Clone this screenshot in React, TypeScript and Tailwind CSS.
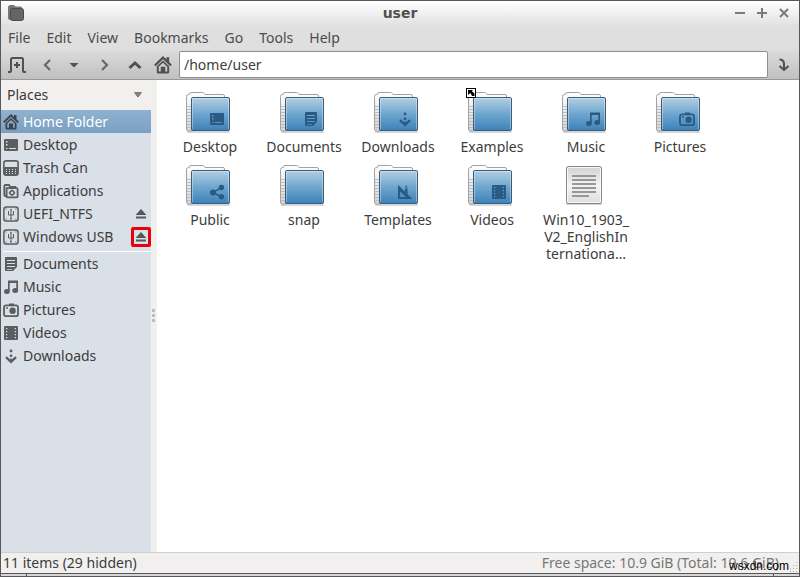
import { useState } from 'react';
import type { ReactNode } from 'react';

type IconName =
  | 'home'
  | 'desktop'
  | 'trash'
  | 'apps'
  | 'usb'
  | 'documents'
  | 'music'
  | 'pictures'
  | 'videos'
  | 'downloads'
  | 'public'
  | 'templates';

// every glyph is drawn on a 16x16 grid so the folders can reuse them as emblems
const glyphs: Record<IconName, ReactNode> = {
  home: (
    <>
      <path d="M0.8 8.4 8 1.4l7.2 7" fill="none" stroke="currentColor" strokeWidth="2" />
      <path d="M11 1h2.5v5L11 3.5z" />
      <path
        fillRule="evenodd"
        d="M2.5 9.2 8 4l5.5 5.2V14.5q0 1-1 1h-9q-1 0-1-1zM4.2 9.6v4.2H6V9.5h4v4.3h1.8V9.6L8 6z"
      />
      <path d="M7 10.5h2V15H7z" />
    </>
  ),
  desktop: (
    <path
      fillRule="evenodd"
      d="M2 2h12q1 0 1 1v10q0 1-1 1H2q-1 0-1-1V3q0-1 1-1zM3 4v1.5h1.5V4zM3 7v1.5h1.5V7zM3 11v1h1.5v-1zM6 11v1h7v-1z"
    />
  ),
  trash: (
    <>
      <rect x="0.9" y="0.9" width="14.2" height="14.2" rx="2.2" fill="none" stroke="currentColor" strokeWidth="1.6" />
      <path
        fillRule="evenodd"
        d="M1 7h14v7.5q0 .5-.5.5h-13q-.5 0-.5-.5zM3 9v1h1V9zM6 9v1h1V9zM9 9v1h1V9zM12 9v1h1V9zM3 11v1h1v-1zM6 11v1h1v-1zM9 11v1h1v-1zM12 11v1h1v-1zM3 13v1h1v-1zM6 13v1h1v-1zM9 13v1h1v-1zM12 13v1h1v-1z"
      />
    </>
  ),
  apps: (
    <>
      <path
        d="M3.8 13H2.2Q1.3 13 1.3 12V3.2Q1.3 2 2.5 2H6l1 1.8h6.200M3.6 5.2h10q1 0 1 1v7.2q0 1-1 1H4.6q-1 0-1-1z"
        fill="none"
        stroke="currentColor"
        strokeWidth="1.8"
      />
      <circle cx="9" cy="9.8" r="2" fill="none" stroke="currentColor" strokeWidth="1.5" />
      <path d="M8.4 6.6h1.2v1H8.4zM8.4 12h1.2v1H8.4zM5.800 9.2h1v1.2h-1zM11.2 9.2h1v1.2h-1z" />
    </>
  ),
  usb: (
    <>
      <rect x="0.9" y="0.9" width="14.2" height="14.2" rx="2.4" fill="none" stroke="currentColor" strokeWidth="1.5" />
      <path d="M8 3v10M5.500 5.500v3.500h5V5.500" fill="none" stroke="currentColor" />
      <path d="M7 4.2 8 2.4l1 1.8zM7.2 12h1.6v1.4H7.2zM5 5h1v1.400H5zM10 5h1v1.400h-1zM2.600 2.600h1v1h-1zM12.4 2.6h1v1h-1zM2.600 12.4h1v1h-1zM12.4 12.4h1v1h-1z" />
    </>
  ),
  documents: (
    <path
      fillRule="evenodd"
      d="M3 1h10q1 0 1 1v9l-4 4H3q-1 0-1-1V2q0-1 1-1zM4 4v1h8V4zM4 7v1h8V7zM4 10v1h8v-1zM4 13v.8h5V13z"
    />
  ),
  music: (
    <>
      <path d="M5 1.5h10v2.6H6.7V12H5zM13.3 3H15v8.5h-1.7z" />
      <ellipse cx="3.9" cy="12.4" rx="2.9" ry="2.5" />
      <ellipse cx="12.2" cy="11.6" rx="2.9" ry="2.5" />
    </>
  ),
  pictures: (
    <>
      <rect x="1" y="3.4" width="14" height="10.8" rx="2" fill="none" stroke="currentColor" strokeWidth="1.8" />
      <path d="M6 1.5h5v2H6zM3 5.2h2v1.5H3z" />
      <circle cx="9.6" cy="8.8" r="3.2" />
    </>
  ),
  videos: (
    <path
      fillRule="evenodd"
      d="M2 1h12q1 0 1 1v12q0 1-1 1H2q-1 0-1-1V2q0-1 1-1zM3 3v1.300h1.300V3zM3 6v1.300h1.300V6zM3 9v1.300h1.300V9zM3 12v1.300h1.300V12zM11.700 3v1.300H13V3zM11.700 6v1.300H13V6zM11.700 9v1.300H13V9zM11.700 12v1.300H13V12z"
    />
  ),
  downloads: (
    <>
      <path d="M3 9.200 8 13.800l5-4.600" fill="none" stroke="currentColor" strokeWidth="2.400" />
      <path d="M7.200 10.500h1.600V13H7.200z" />
      <circle cx="8" cy="3" r="1.400" />
      <circle cx="8" cy="7.800" r="1.400" />
    </>
  ),
  public: (
    <>
      <path d="M12.5 3.6 4 8.4l8.5 4.4" fill="none" stroke="currentColor" strokeWidth="1.6" />
      <circle cx="4" cy="8.4" r="3" />
      <circle cx="12.4" cy="3.5" r="2.7" />
      <circle cx="12.4" cy="12.8" r="2.7" />
    </>
  ),
  templates: (
    <>
      <path fillRule="evenodd" d="M1 1 15.500 15H1zM3.200 7.400V13h5.600z" />
      <path d="M8 4.500h2.500V11L8 8.500zM8 3.500l1.250-2.500 1.250 2.500z" />
    </>
  ),
};

const Icon = ({ name, className }: { name: IconName; className?: string }) => (
  <svg viewBox="0 0 16 16" className={className ?? 'size-4 shrink-0'} fill="currentColor" aria-hidden="true">
    {glyphs[name]}
  </svg>
);

const Eject = () => (
  <svg viewBox="0 0 12 12" className="size-3" fill="#555859" aria-hidden="true">
    <path d="M6 1 11.4 7H.6zM1 8.5h10v2H1z" />
  </svg>
);

const FolderIcon = ({ emblem, link }: { emblem?: IconName; link?: boolean }) => (
  <svg viewBox="0 0 48 48" className="size-12 overflow-visible" aria-hidden="true">
    <defs>
      <linearGradient id="front" x1="0" y1="0" x2="0" y2="1">
        <stop offset="0" stopColor="#b3cfe4" />
        <stop offset="0.5" stopColor="#6fa6cf" />
        <stop offset="1" stopColor="#3c82b9" />
      </linearGradient>
      <linearGradient id="paper" x1="0" y1="0" x2="0" y2="1">
        <stop offset="0" stopColor="#ffffff" />
        <stop offset="1" stopColor="#d4d4d4" />
      </linearGradient>
    </defs>
    <rect x="1" y="41" width="43" height="3" rx="1.5" fill="#000" opacity="0.16" />
    <path
      d="M.5 40V7.5q0-2 2-2h.8V5q0-1.500 1.700-1.500H16.500q1.500 0 2 1l.5 1h18q1.500 0 1.500 1.500v3H6v32H2.500q-2 0-2-2z"
      fill="url(#paper)"
      stroke="#a2a2a2"
    />
    <path d="M1 17.500h4M1 20.500h4M1 23.500h4M1 26.500h4M1 29.500h4M1 32.500h4M1 35.500h4M1 38.500h4" stroke="#bdbdbd" />
    <rect x="5.500" y="8.500" width="38" height="33" rx="1.500" fill="url(#front)" stroke="#3b5b78" />
    <path d="M6.500 40V9.500h36V40" fill="none" stroke="#fff" opacity="0.35" />
    {emblem && (
      <svg x="23" y="22" width="16" height="16" viewBox="0 0 16 16" fill="currentColor" color="#2b5a82">
        {glyphs[emblem]}
      </svg>
    )}
    {link && (
      <>
        <rect x="-1.500" y="-.5" width="9" height="9" fill="#fff" stroke="#000" />
        <path d="M0 1h5L3.800 2.300 6.500 4.500V7H4L2.500 4 0 6z" fill="#000" />
      </>
    )}
  </svg>
);

const TextFileIcon = () => (
  <svg viewBox="0 0 48 48" className="size-12" aria-hidden="true">
    <defs>
      <linearGradient id="sheet" x1="0" y1="0" x2="0" y2="1">
        <stop offset="0" stopColor="#d2d2d2" />
        <stop offset="0.5" stopColor="#f3f3f3" />
        <stop offset="1" stopColor="#dedede" />
      </linearGradient>
    </defs>
    <rect x="4" y="40" width="36" height="3" rx="1.500" fill="#000" opacity="0.18" />
    <rect x="4.500" y="4.500" width="35" height="37" rx="2" fill="url(#sheet)" stroke="#858585" />
    <rect x="5.500" y="5.500" width="33" height="35" rx="1" fill="none" stroke="#fff" opacity="0.8" />
    <path d="M10 14h24M10 18h24M10 22h24M10 26h24M10 30h24M10 34h17" stroke="#989898" strokeWidth="2" />
  </svg>
);

interface Place {
  name: string;
  icon: IconName;
  active?: boolean;
  eject?: boolean;
  marked?: boolean;
}

const places: Place[] = [
  { name: 'Home Folder', icon: 'home', active: true },
  { name: 'Desktop', icon: 'desktop' },
  { name: 'Trash Can', icon: 'trash' },
  { name: 'Applications', icon: 'apps' },
  { name: 'UEFI_NTFS', icon: 'usb', eject: true },
  { name: 'Windows USB', icon: 'usb', eject: true, marked: true },
];

const bookmarks: Place[] = [
  { name: 'Documents', icon: 'documents' },
  { name: 'Music', icon: 'music' },
  { name: 'Pictures', icon: 'pictures' },
  { name: 'Videos', icon: 'videos' },
  { name: 'Downloads', icon: 'downloads' },
];

const files: { name: string; emblem?: IconName; link?: boolean; text?: boolean }[] = [
  { name: 'Desktop', emblem: 'desktop' },
  { name: 'Documents', emblem: 'documents' },
  { name: 'Downloads', emblem: 'downloads' },
  { name: 'Examples', link: true },
  { name: 'Music', emblem: 'music' },
  { name: 'Pictures', emblem: 'pictures' },
  { name: 'Public', emblem: 'public' },
  { name: 'snap' },
  { name: 'Templates', emblem: 'templates' },
  { name: 'Videos', emblem: 'videos' },
  { name: 'Win10_1903_\nV2_EnglishIn\nternationa…', text: true },
];

const menus = ['File', 'Edit', 'View', 'Bookmarks', 'Go', 'Tools', 'Help'];

const PlaceRow = ({ place }: { place: Place }) => (
  <li
    className={
      place.active
        ? 'flex h-[23px] items-center bg-linear-to-b from-[#8fb2d0] to-[#7a9fc1] text-white'
        : 'flex h-[23px] items-center'
    }
  >
    <a href="#" className="flex flex-1 items-center gap-1 pl-0.5 whitespace-nowrap">
      <span className={place.active ? 'text-[#3c4348]' : 'text-[#5b5e60]'}>
        <Icon name={place.icon} />
      </span>
      {place.name}
    </a>
    {place.eject && (
      <button
        aria-label={`Eject ${place.name}`}
        className={
          place.marked
            ? 'flex size-5 items-center justify-center rounded-xs border-3 border-[#e8000a]'
            : 'flex size-5 items-center justify-center'
        }
      >
        <Eject />
      </button>
    )}
  </li>
);

const ToolButton = ({ label, className, children }: { label: string; className: string; children: ReactNode }) => (
  <button aria-label={label} className={`flex h-7 items-center justify-center ${className}`}>
    {children}
  </button>
);

const App = () => {
  const [path, setPath] = useState('/home/user');

  return (
    <div className="relative flex h-screen flex-col overflow-hidden border border-[#58585a] bg-[#f1f0ef] font-['Noto_Sans','Open_Sans',sans-serif] text-sm text-[#3c3c3c]">
      <header className="flex h-6 shrink-0 items-center bg-linear-to-b from-white to-[#e2e2e2] px-1.5">
        <div className="flex-1">
          <svg viewBox="0 0 18 18" className="size-[18px]" aria-hidden="true">
            <path d="M1 14V3.500Q1 1 3.500 1H7l1.500 1.500h5Q15 2.500 15 4v1H4v11Q1 16 1 14z" fill="#777" />
            <rect x="3.500" y="4.500" width="13" height="12" rx="2" fill="#656565" stroke="#4a4a4a" />
          </svg>
        </div>
        <h1 className="font-['DejaVu_Sans',sans-serif] font-bold text-[#505050]">user</h1>
        <div className="flex flex-1 items-center justify-end gap-3 text-[#7a7a7a]">
          <button aria-label="Minimize">
            <svg viewBox="0 0 10 10" className="size-2.5" stroke="currentColor" strokeWidth="2">
              <path d="M0 5h10" />
            </svg>
          </button>
          <button aria-label="Maximize">
            <svg viewBox="0 0 10 10" className="size-2.5" stroke="currentColor" strokeWidth="2">
              <path d="M0 5h10M5 0v10" />
            </svg>
          </button>
          <button aria-label="Close" className="mr-1">
            <svg viewBox="0 0 10 10" className="size-2.5" stroke="currentColor" strokeWidth="2">
              <path d="m1 1 8 8M9 1 1 9" />
            </svg>
          </button>
        </div>
      </header>

      <nav className="flex h-[25px] shrink-0 items-center gap-4 bg-[#dfdfdf] px-[7px] text-[#4c4c4c]">
        {menus.map((menu) => (
          <button key={menu}>{menu}</button>
        ))}
      </nav>

      <div className="flex h-[30px] shrink-0 items-center border-b border-[#999] bg-linear-to-b from-[#dcdcdc] to-[#c0c0c0] text-[#505050]">
        <ToolButton label="New tab" className="w-8">
          <svg viewBox="0 0 18 18" className="size-[18px]" fill="none" stroke="currentColor" strokeWidth="2">
            <path d="M0 16h2Q3 16 3 15V3.500Q3 2 4.500 2h9Q15 2 15 3.500V15q0 1 1 1h2" />
            <path d="M9 6v6M6 9h6" />
          </svg>
        </ToolButton>
        <ToolButton label="Back" className="w-7">
          <svg viewBox="0 0 10 12" className="h-3 w-2.5" fill="none" stroke="#686868" strokeWidth="2.200">
            <path d="M8 1 3 6l5 5" />
          </svg>
        </ToolButton>
        <ToolButton label="History" className="w-[26px]">
          <svg viewBox="0 0 10 6" className="h-1.5 w-2.5" fill="currentColor">
            <path d="M.5 1h9L5 5.500z" />
          </svg>
        </ToolButton>
        <ToolButton label="Forward" className="w-9">
          <svg viewBox="0 0 10 12" className="h-3 w-2.5" fill="none" stroke="#686868" strokeWidth="2.200">
            <path d="m2 1 5 5-5 5" />
          </svg>
        </ToolButton>
        <ToolButton label="Up" className="w-6">
          <svg viewBox="0 0 14 10" className="h-2.5 w-3.5" fill="none" stroke="currentColor" strokeWidth="3">
            <path d="m1.500 8 5.500-5 5.500 5" />
          </svg>
        </ToolButton>
        <ToolButton label="Home" className="w-8">
          <Icon name="home" className="size-[18px]" />
        </ToolButton>
        <input
          aria-label="Path"
          value={path}
          onChange={(e) => setPath(e.target.value)}
          className="h-[27px] min-w-0 flex-1 rounded-xs border border-[#8f8f8f] bg-white px-1 text-[#3c3c3c] outline-none"
        />
        <ToolButton label="Go to path" className="w-[31px]">
          <svg viewBox="0 0 12 14" className="h-3.5 w-3" fill="none" stroke="currentColor" strokeWidth="2">
            <path d="M1.500 1.500Q6 1.500 6 6v6M1.500 8 6 12l4.500-4" />
          </svg>
        </ToolButton>
      </div>

      <main className="flex min-h-0 flex-1">
        <aside className="flex w-[156px] shrink-0 flex-col">
          <button className="flex h-[30px] shrink-0 items-center justify-between pr-[15px] pl-1.5">
            Places
            <svg viewBox="0 0 8 6" className="h-1.5 w-2" aria-hidden="true">
              <path d="M.7.7h6.600L4 5z" fill="#8a8a8a" stroke="#666" />
            </svg>
          </button>
          <div className="flex min-h-0 flex-1">
            <div className="flex-1 bg-[#dae0e7]">
              <ul>
                {places.map((place) => (
                  <PlaceRow key={place.name} place={place} />
                ))}
              </ul>
              <hr className="mt-[3px] ml-0.5 border-white" />
              <ul>
                {bookmarks.map((place) => (
                  <PlaceRow key={place.name} place={place} />
                ))}
              </ul>
            </div>
            <div className="flex w-1.5 flex-col items-start justify-center gap-0.5 pb-8 pl-px">
              <span className="size-[3px] rounded-full border border-[#888]" />
              <span className="size-[3px] rounded-full border border-[#888]" />
              <span className="size-[3px] rounded-full border border-[#888]" />
            </div>
          </div>
        </aside>

        <section className="grid flex-1 grid-cols-[repeat(auto-fill,94px)] content-start gap-y-[7px] bg-white pt-[9px] pl-1.5">
          {files.map((file) => (
            <button key={file.name} className="flex flex-col items-center justify-start gap-px">
              {file.text ? <TextFileIcon /> : <FolderIcon emblem={file.emblem} link={file.link} />}
              <span className="leading-[17px] whitespace-pre-line">{file.name}</span>
            </button>
          ))}
        </section>
      </main>

      <footer className="flex h-[21px] shrink-0 items-center justify-between border-t border-[#d0cfce] pr-5 pl-0.5">
        <span>11 items (29 hidden)</span>
        <span className="text-[#777]">Free space: 10.9 GiB (Total: 19.6 GiB)</span>
      </footer>
      <div className="flex h-[3px] shrink-0 justify-between border-t border-[#58585a] bg-[#d6d6d6] px-[25px]">
        <span className="w-px bg-[#58585a]" />
        <span className="w-px bg-[#58585a]" />
      </div>

      <svg viewBox="0 0 10 10" className="absolute right-px bottom-1 size-2.5" fill="#aaa" aria-hidden="true">
        <path d="M8 0h1v1H8zM8 3h1v1H8zM5 3h1v1H5zM8 6h1v1H8zM5 6h1v1H5zM2 6h1v1H2zM8 9h1v1H8zM5 9h1v1H5zM2 9h1v1H2z" />
      </svg>
      <span className="absolute right-2.5 bottom-0.5 font-['Liberation_Sans',sans-serif] text-xs text-black">
        wsxdn.com
      </span>
    </div>
  );
};

export default App;
